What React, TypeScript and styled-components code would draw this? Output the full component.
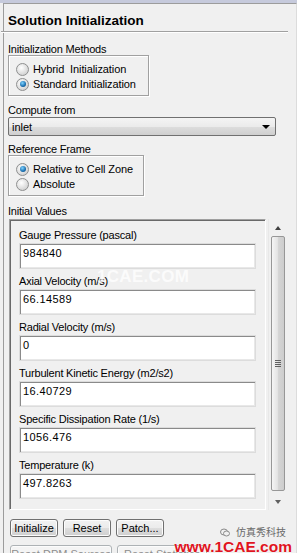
import styled, { createGlobalStyle } from "styled-components";

const GlobalStyle = createGlobalStyle`
  html, body {
    margin: 0;
    padding: 0;
    background: #f0f0f0;
    overflow: hidden;
  }
  body {
    font-family: "Liberation Sans", Arial, sans-serif;
    font-size: 11px;
    color: #000;
  }
`;

const Fenster = styled.div`
  position: relative;
  width: 297px;
  height: 553px;
  overflow: hidden;
  border-top: 3px solid #c6cadc;
  box-sizing: border-box;
`;

const Ramme = styled.div`
  margin-left: 3px;
  height: 100%;
  border-top: 1px solid #9c9c9c;
  border-left: 1px solid #9c9c9c;
  border-right: 1px solid #dcdcdc;
  box-sizing: border-box;
`;

const Tittel = styled.h1`
  margin: 0 8px 0 -3px;
  padding: 10px 0 3px 7px;
  font-size: 13.5px;
  line-height: 14px;
  font-weight: bold;
  letter-spacing: 0;
  border-bottom: 1px solid #a0a0a0;
  box-shadow: 0 1px 0 #fff;
`;

const Innhold = styled.div`
  padding: 11px 0 0 4px;
  display: flex;
  flex-direction: column;
`;

const Etikett = styled.div`
  line-height: 12px;
  height: 12px;
  letter-spacing: -0.2px;
`;

const Gruppe = styled.div<{ $bredde: number }>`
  width: ${(p) => p.$bredde}px;
  border: 1px solid #a0a0a0;
  box-shadow: inset 1px 1px 0 #fff, 1px 1px 0 #fff;
  padding: 7px 0 5px 7px;
  box-sizing: border-box;
  display: flex;
  flex-direction: column;
  gap: 3px;
`;

const Radiorad = styled.label`
  display: flex;
  align-items: center;
  gap: 4px;
  height: 12px;
  font-size: 11px;
  letter-spacing: -0.1px;
`;

const Radioknapp = styled.span<{ $valgt?: boolean }>`
  width: 11px;
  height: 11px;
  border-radius: 50%;
  border: 1px solid #8e8f8f;
  background: radial-gradient(circle at 40% 35%, #ffffff, #d6d6d6 70%, #c4c4c4);
  display: flex;
  align-items: center;
  justify-content: center;
  &::after {
    content: "";
    display: ${(p) => (p.$valgt ? "block" : "none")};
    width: 6px;
    height: 6px;
    border-radius: 50%;
    background: radial-gradient(circle at 40% 35%, #7fd3ff, #1a6fb0 60%, #0c3f6e);
  }
`;

const Seksjon = styled.div<{ $topp: number }>`
  margin-top: ${(p) => p.$topp}px;
  display: flex;
  flex-direction: column;
`;

const Nedtrekk = styled.div`
  margin-top: 1px;
  width: 268px;
  height: 19px;
  box-sizing: border-box;
  border: 1px solid #707070;
  border-radius: 2px;
  background: linear-gradient(#f4f4f4 0%, #ebebeb 50%, #dddddd 51%, #cfcfcf 100%);
  display: flex;
  align-items: center;
  justify-content: space-between;
  padding: 0 5px 0 3px;
  font-size: 11px;
`;

const Pil = styled.span`
  width: 0;
  height: 0;
  border-left: 4px solid transparent;
  border-right: 4px solid transparent;
  border-top: 4px solid #000;
`;

const VerdiOmraade = styled.div`
  margin: 2px 0 0 1px;
  display: flex;
  gap: 2px;
  height: 291px;
`;

const Innfelt = styled.div`
  width: 257px;
  box-sizing: border-box;
  border: 1px solid;
  border-color: #a0a0a0 #fff #fff #a0a0a0;
  box-shadow: inset 1px 1px 0 #696969;
  padding: 9px 0 0 9px;
  display: flex;
  flex-direction: column;
  gap: 6px;
`;

const Felt = styled.div`
  display: flex;
  flex-direction: column;
  gap: 2px;
`;

const Tekstfelt = styled.div`
  width: 237px;
  height: 26px;
  box-sizing: border-box;
  background: #fff;
  border: 1px solid #dcdcdc;
  box-shadow: inset 1px 1px 0 #8a8a8a, inset -1px -1px 0 #e8e8e8;
  padding: 3px 0 0 3px;
  font-size: 11px;
  letter-spacing: 0.4px;
`;

const Rullefelt = styled.div`
  width: 17px;
  display: flex;
  flex-direction: column;
  align-items: center;
  background: #f0f0f0;
  border-left: 1px solid #e8e8e8;
`;

const RullePil = styled.div<{ $opp?: boolean }>`
  height: 17px;
  display: flex;
  align-items: center;
  justify-content: center;
  &::after {
    content: "";
    border-left: 3.5px solid transparent;
    border-right: 3.5px solid transparent;
    ${(p) => (p.$opp ? "border-bottom: 4px solid #404040;" : "border-top: 4px solid #606060;")}
  }
`;

const Tommel = styled.div`
  width: 14px;
  flex: 1;
  margin-bottom: 2px;
  box-sizing: border-box;
  border: 1px solid #979797;
  border-radius: 2px;
  background: linear-gradient(90deg, #f5f5f5, #e4e4e4 45%, #d4d4d4 55%, #cdcdcd);
  display: flex;
  align-items: center;
  justify-content: center;
`;

const Grep = styled.span`
  width: 6px;
  height: 7px;
  background: repeating-linear-gradient(#606060 0 1px, transparent 1px 2px);
`;

const Knapperad = styled.div<{ $topp: number }>`
  margin-top: ${(p) => p.$topp}px;
  display: flex;
  gap: 5px;
  padding-left: 2px;
`;

const Knapp = styled.button<{ $bredde: number; $av?: boolean }>`
  width: ${(p) => p.$bredde}px;
  height: 18px;
  padding: 0;
  font-family: inherit;
  font-size: 11px;
  color: ${(p) => (p.$av ? "#8d8d8d" : "#000")};
  border: 1px solid ${(p) => (p.$av ? "#adb2b5" : "#707070")};
  border-radius: 3px;
  background: ${(p) =>
    p.$av ? "#f4f4f4" : "linear-gradient(#f2f2f2 0%, #ebebeb 50%, #dddddd 51%, #cfcfcf 100%)"};
  box-shadow: inset 0 0 0 1px #fcfcfc;
`;

const Vannmerke = styled.div`
  position: absolute;
  left: 97px;
  top: 265px;
  font-family: "Liberation Sans", Arial, sans-serif;
  font-weight: bold;
  font-size: 17px;
  line-height: 17px;
  color: rgba(255, 255, 255, 0.75);
  letter-spacing: 0.3px;
  pointer-events: none;
`;

const Merke = styled.div`
  position: absolute;
  right: 5px;
  bottom: -3px;
  display: flex;
  flex-direction: column;
  align-items: flex-end;
`;

const MerkeTekst = styled.span`
  display: flex;
  align-items: center;
  gap: 6px;
  font-family: "Noto Sans CJK SC", sans-serif;
  font-size: 10px;
  line-height: 12px;
  color: #6a6a6a;
  margin-right: 6px;
`;

const MerkeUrl = styled.span`
  font-family: "Liberation Sans", Arial, sans-serif;
  font-weight: bold;
  font-size: 15.5px;
  color: #e0141e;
  line-height: 18px;
  text-shadow: 0 0 1px #fff;
`;

const felter = [
  ["Gauge Pressure (pascal)", "984840"],
  ["Axial Velocity (m/s)", "66.14589"],
  ["Radial Velocity (m/s)", "0"],
  ["Turbulent Kinetic Energy (m2/s2)", "16.40729"],
  ["Specific Dissipation Rate (1/s)", "1056.476"],
  ["Temperature (k)", "497.8263"],
];

export default function App() {
  return (
    <>
      <GlobalStyle />
      <Fenster>
        <Ramme>
          <Tittel>Solution Initialization</Tittel>
          <Innhold>
            <Etikett>Initialization Methods</Etikett>
            <Gruppe $bredde={141}>
              <Radiorad><Radioknapp />Hybrid&nbsp; Initialization</Radiorad>
              <Radiorad><Radioknapp $valgt />Standard Initialization</Radiorad>
            </Gruppe>

            <Seksjon $topp={8}>
              <Etikett>Compute from</Etikett>
              <Nedtrekk>
                inlet
                <Pil />
              </Nedtrekk>
            </Seksjon>

            <Seksjon $topp={7}>
              <Etikett>Reference Frame</Etikett>
              <Gruppe $bredde={136}>
                <Radiorad><Radioknapp $valgt />Relative to Cell Zone</Radiorad>
                <Radiorad><Radioknapp />Absolute</Radiorad>
              </Gruppe>
            </Seksjon>

            <Seksjon $topp={9}>
              <Etikett>Initial Values</Etikett>
              <VerdiOmraade>
                <Innfelt>
                  {felter.map(([navn, verdi]) => (
                    <Felt key={navn}>
                      <Etikett>{navn}</Etikett>
                      <Tekstfelt>{verdi}</Tekstfelt>
                    </Felt>
                  ))}
                </Innfelt>
                <Rullefelt>
                  <RullePil $opp />
                  <Tommel>
                    <Grep />
                  </Tommel>
                  <RullePil />
                </Rullefelt>
              </VerdiOmraade>
            </Seksjon>

            <Knapperad $topp={9}>
              <Knapp $bredde={48}>Initialize</Knapp>
              <Knapp $bredde={48}>Reset</Knapp>
              <Knapp $bredde={48}>Patch...</Knapp>
            </Knapperad>
            <Knapperad $topp={8}>
              <Knapp $bredde={102} $av>Reset DPM Sources</Knapp>
              <Knapp $bredde={90} $av>Reset Statistics</Knapp>
            </Knapperad>
          </Innhold>
        </Ramme>
        <Vannmerke>1CAE.COM</Vannmerke>
        <Merke>
          <MerkeTekst>
            <svg width="10" height="9" viewBox="0 0 10 9">
              <ellipse cx="4" cy="4" rx="3.5" ry="3" fill="none" stroke="#8a8a8a" strokeWidth="1" />
              <ellipse cx="6.5" cy="5.5" rx="3" ry="2.5" fill="#f0f0f0" stroke="#8a8a8a" strokeWidth="1" />
            </svg>
            仿真秀科技
          </MerkeTekst>
          <MerkeUrl>www.1CAE.com</MerkeUrl>
        </Merke>
      </Fenster>
    </>
  );
}
